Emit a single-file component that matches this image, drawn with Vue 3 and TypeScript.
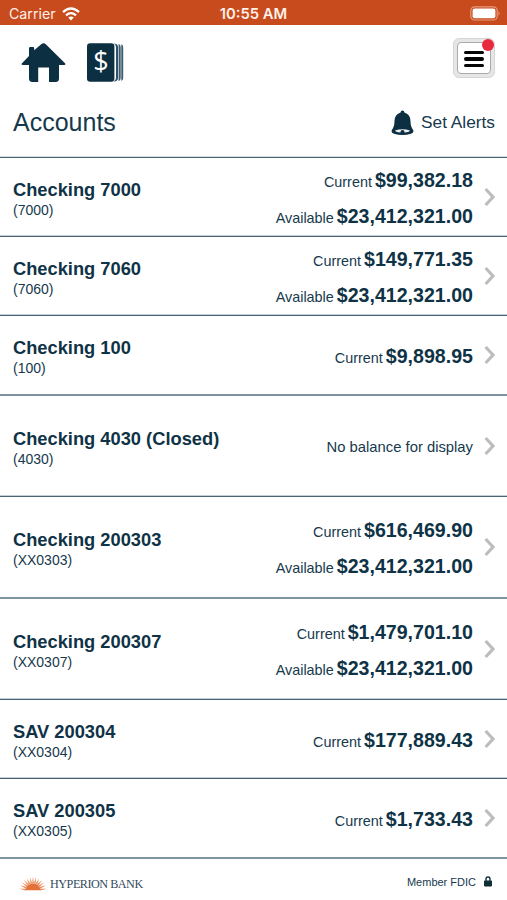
<script setup lang="ts">
interface Balance {
  label: string
  amount: string
}

interface Account {
  name: string
  mask: string
  height: number
  soft?: boolean
  balances: Balance[]
}

const accounts: Account[] = [
  { name: 'Checking 7000', mask: '7000', height: 79, balances: [{ label: 'Current', amount: '$99,382.18' }, { label: 'Available', amount: '$23,412,321.00' }] },
  { name: 'Checking 7060', mask: '7060', height: 79, balances: [{ label: 'Current', amount: '$149,771.35' }, { label: 'Available', amount: '$23,412,321.00' }] },
  { name: 'Checking 100', mask: '100', height: 80, soft: true, balances: [{ label: 'Current', amount: '$9,898.95' }] },
  { name: 'Checking 4030 (Closed)', mask: '4030', height: 101, balances: [] },
  { name: 'Checking 200303', mask: 'XX0303', height: 102, soft: true, balances: [{ label: 'Current', amount: '$616,469.90' }, { label: 'Available', amount: '$23,412,321.00' }] },
  { name: 'Checking 200307', mask: 'XX0307', height: 101, balances: [{ label: 'Current', amount: '$1,479,701.10' }, { label: 'Available', amount: '$23,412,321.00' }] },
  { name: 'SAV 200304', mask: 'XX0304', height: 79, balances: [{ label: 'Current', amount: '$177,889.43' }] },
  { name: 'SAV 200305', mask: 'XX0305', height: 80, soft: true, balances: [{ label: 'Current', amount: '$1,733.43' }] },
]

const rays = [-82, -68, -54, -40, -27, -13, 0, 13, 27, 40, 54, 68, 82]
</script>

<template>
  <div class="screen">
    <header class="status">
      <div class="carrier">
        <span>Carrier</span>
        <svg width="18" height="14" viewBox="0 0 18 14" fill="none" stroke="#fff" stroke-width="2.3">
          <path d="M1 5.2Q9-2.2 17 5.2" />
          <path d="M4 8.3Q9 4 14 8.3" />
          <path d="M6.2 10.6Q9 8.2 11.8 10.6L9 13.4Z" fill="#fff" stroke="none" />
        </svg>
      </div>
      <span class="time">10:55 AM</span>
      <svg class="battery" width="31" height="15" viewBox="0 0 31 15">
        <rect x=".8" y=".8" width="26.4" height="13.2" rx="3.8" fill="none" stroke="#e59b7e" stroke-width="1.2" />
        <rect x="2.6" y="2.6" width="22.8" height="9.6" rx="2" fill="#fff" />
        <path d="M28.5 5.2Q30.8 7.4 28.5 9.6Z" fill="#e59b7e" />
      </svg>
    </header>

    <nav class="toolbar">
      <div class="shortcuts">
        <svg width="46" height="40" viewBox="0 0 46 40" fill="#0d2f42">
          <path d="M8 11V5.2Q8 4 9.2 4H12Q13.2 4 13.2 5.2V7.3L20.2 1.2Q22.5-.7 24.8 1.2L44 20.2Q45.2 22 43.2 22H38V35.5Q38 39 34.5 39H28V24.5H17.2V39H11.5Q8 39 8 35.5V22H1.8Q-.2 22 1 20.2L8 13Z" />
        </svg>
        <svg width="37" height="40" viewBox="0 0 37 40">
          <rect x="0" y=".3" width="27.4" height="38.4" rx="3.2" fill="#0d2f42" />
          <path d="M28 .8Q31 1.2 31 4V35Q31 38 28 38.4H26.5Q29 37.5 29 35V4Q29 1.5 26.5.6Z" fill="#2f5063" />
          <path d="M31.6 1Q33.7 1.7 33.7 4V35Q33.7 37.5 31.6 38.2ZM34.3 1.3Q36.2 2 36.2 4V35Q36.2 37 34.3 37.9Z" fill="#3c5c6e" />
          <text x="14" y="28" text-anchor="middle" fill="#fff" class="dollar">$</text>
        </svg>
      </div>
      <button class="menu" aria-label="Menu">
        <span class="menu-face"><i></i><i></i><i></i></span>
        <span class="dot"></span>
      </button>
    </nav>

    <div class="heading">
      <h1>Accounts</h1>
      <div class="alerts">
        <svg width="23" height="26" viewBox="0 0 23 26">
          <path d="M9.6 2.5Q9.6 .5 11.5 .5T13.4 2.5Q19.3 4.2 19.5 11Q19.5 17 22.3 20.3Q23 23 20 23.8Q11.5 26.3 3 23.8Q0 23 .7 20.3Q3.5 17 3.5 11Q3.7 4.2 9.6 2.5Z" fill="#0d2f42" />
          <path d="M4 20.4Q11.5 18 19 20.4L17.8 21.8Q15.8 22.4 13.6 22.4Q13.5 20 11.5 20T9.4 22.4Q7.2 22.4 5.2 21.8Z" fill="#e9eff2" />
        </svg>
        <span>Set Alerts</span>
      </div>
    </div>

    <main class="list">
      <article
        v-for="account in accounts"
        :key="account.name"
        class="row"
        :class="{ soft: account.soft }"
        :style="{ height: account.height + 'px' }"
      >
        <div class="who">
          <strong>{{ account.name }}</strong>
          <span>({{ account.mask }})</span>
        </div>
        <div class="balances">
          <div v-for="balance in account.balances" :key="balance.label" class="balance">
            <span>{{ balance.label }}</span>
            <b>{{ balance.amount }}</b>
          </div>
          <div v-if="!account.balances.length" class="none">No balance for display</div>
        </div>
        <svg class="chevron" width="12" height="20" viewBox="0 0 12 20" fill="none" stroke="#bdbdbd" stroke-width="3.2">
          <path d="M1.6 2L9 10L1.6 18" />
        </svg>
      </article>
    </main>

    <footer class="footer">
      <div class="brand">
        <svg width="30" height="16" viewBox="0 0 30 16">
          <path d="M7.2 14.2Q9 7.6 15 7.6T22.8 14.2Z" fill="#e2713a" />
          <g fill="#e88b58">
            <path v-for="angle in rays" :key="angle" d="M14.1 7.4L15 .6L15.9 7.4Z" :transform="`rotate(${angle} 15 14.6)`" />
          </g>
        </svg>
        <span>HYPERION BANK</span>
      </div>
      <div class="fdic">
        <span>Member FDIC</span>
        <svg width="8" height="11" viewBox="0 0 8 11">
          <path d="M2 5V3Q2 1 4 1T6 3V5" fill="none" stroke="#0d2f35" stroke-width="1.4" />
          <rect y="4.6" width="8" height="5.8" rx=".8" fill="#0d2f35" />
        </svg>
      </div>
    </footer>
  </div>
</template>

<style>
body {
  margin: 0;
  background: #fff;
}
</style>

<style scoped>
.screen {
  width: 507px;
  height: 900px;
  box-sizing: border-box;
  overflow: hidden;
  display: flex;
  flex-direction: column;
  background: #fff;
  color: #16394c;
  font-family: "Liberation Sans", Arial, sans-serif;
}

.status {
  height: 25px;
  flex: none;
  box-sizing: border-box;
  padding: 2px 6px 0 9px;
  display: grid;
  grid-template-columns: 1fr auto 1fr;
  align-items: center;
  background: #c74b1d;
  color: #fff0e9;
  font: 14.2px/20px Inter, sans-serif;
}

.carrier {
  display: flex;
  align-items: center;
  gap: 6px;
}

.time {
  margin-right: 3px;
  font-weight: 600;
  font-size: 14.8px;
}

.battery {
  justify-self: end;
}

.toolbar {
  height: 70px;
  flex: none;
  box-sizing: border-box;
  padding: 13px 12px 0 21px;
  display: flex;
  justify-content: space-between;
}

.shortcuts {
  display: flex;
  gap: 20px;
  padding-top: 5px;
}

.dollar {
  font: 27px "Open Sans", sans-serif;
}

.menu {
  position: relative;
  width: 42px;
  height: 40px;
  padding: 3px;
  border: 1px solid #d6d6d6;
  border-radius: 6px;
  background: #e6e6e6;
}

.menu-face {
  height: 100%;
  box-sizing: border-box;
  display: flex;
  flex-direction: column;
  align-items: center;
  justify-content: center;
  gap: 3px;
  padding-top: 2px;
  border: 1px solid #aaa;
  border-radius: 4px;
  background: #fff;
}

.menu-face i {
  width: 20px;
  height: 3.4px;
  border-radius: 2px;
  background: #050505;
}

.dot {
  position: absolute;
  top: 0;
  right: 0;
  width: 12px;
  height: 12px;
  border-radius: 50%;
  background: #e8283e;
}

.heading {
  height: 62px;
  flex: none;
  box-sizing: border-box;
  padding: 13px 12px 0 13px;
  display: flex;
  align-items: flex-start;
  justify-content: space-between;
}

h1 {
  margin: 0;
  font-size: 25px;
  line-height: 28px;
  font-weight: 400;
}

.alerts {
  display: flex;
  align-items: center;
  gap: 7px;
  font-size: 17.3px;
  line-height: 29px;
}

.list {
  border-top: 1px solid #4a6474;
  box-shadow: 0 -1px #d5dee3;
}

.row {
  box-sizing: border-box;
  padding: 0 11px 0 13px;
  display: flex;
  align-items: center;
  border-bottom: 1px solid #4a6474;
  box-shadow: inset 0 -1px #c3cfd6;
}

.row.soft {
  border-bottom: 2px solid #8093a0;
  box-shadow: none;
}

.who {
  flex: 1;
  display: flex;
  flex-direction: column;
  padding-top: 5px;
}

.who strong {
  color: #0f3346;
  font-size: 18.3px;
  line-height: 21px;
}

.who span {
  font-size: 14px;
  line-height: 21px;
}

.balances {
  padding-top: 3px;
}

.balance {
  display: flex;
  justify-content: flex-end;
  align-items: baseline;
  gap: 3px;
  line-height: 35.7px;
}

.balance span {
  font-size: 14.4px;
  line-height: 16px;
}

.balance b {
  color: #0f3346;
  font-size: 19.6px;
}

.none {
  font-size: 14.8px;
  line-height: 17px;
}

.chevron {
  margin-left: 11px;
}

.footer {
  flex: 1;
  padding: 0 15px 0 18px;
  display: flex;
  align-items: center;
  justify-content: space-between;
}

.brand {
  display: flex;
  align-items: center;
  gap: 2px;
  padding-top: 9px;
  color: #334a5c;
  font: 12.2px/17px "Liberation Serif", serif;
  letter-spacing: -0.5px;
}

.fdic {
  display: flex;
  align-items: center;
  gap: 8px;
  padding-top: 4px;
  font-size: 11px;
}
</style>
